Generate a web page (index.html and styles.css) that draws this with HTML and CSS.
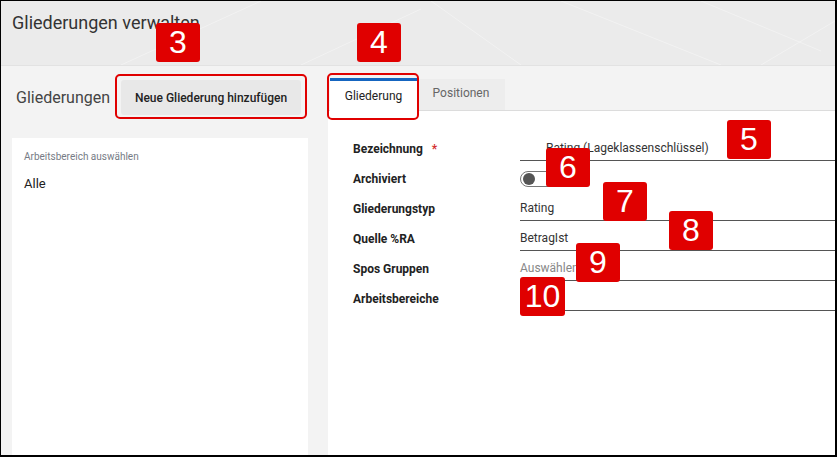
FILE: index.html
```html
<!DOCTYPE html>
<html lang="de">
<head>
    <meta charset="UTF-8">
    <meta name="viewport" content="width=device-width, initial-scale=1.0">
    <title>Gliederungen verwalten</title>
    <link rel="stylesheet" href="styles.css">
</head>
<body>
    <div class="frame">
        <header class="top">
            <svg class="top-texture" width="834" height="64" viewBox="0 0 834 64">
                <path d="M120 64 L260 0 M300 64 L420 8 M560 0 L720 64 M700 0 L820 50 M760 64 L834 20 M430 0 L520 64" stroke="#ffffff" stroke-width="1" fill="none" opacity="0.35"/>
            </svg>
            <h1>Gliederungen verwalten</h1>
        </header>

        <div class="main">
            <div class="left">
                <div class="left-head">
                    <span class="left-title">Gliederungen</span>
                    <button class="add-button">Neue Gliederung hinzufügen</button>
                </div>
                <div class="panel">
                    <div class="panel-label">Arbeitsbereich auswählen</div>
                    <div class="panel-item">Alle</div>
                </div>
            </div>

            <div class="right">
                <div class="tabs">
                    <div class="tab active">Gliederung</div>
                    <div class="tab">Positionen</div>
                </div>
                <div class="form-panel">
                    <div class="row">
                        <label class="field-label">Bezeichnung <span class="req">*</span></label>
                        <div class="field line indent">Rating (Lageklassenschlüssel)</div>
                    </div>
                    <div class="row">
                        <label class="field-label">Archiviert</label>
                        <div class="field">
                            <span class="toggle"><span class="knob"></span></span>
                        </div>
                    </div>
                    <div class="row">
                        <label class="field-label">Gliederungstyp</label>
                        <div class="field line">Rating</div>
                    </div>
                    <div class="row">
                        <label class="field-label">Quelle %RA</label>
                        <div class="field line">BetragIst</div>
                    </div>
                    <div class="row">
                        <label class="field-label">Spos Gruppen</label>
                        <div class="field line placeholder">Auswählen</div>
                    </div>
                    <div class="row">
                        <label class="field-label">Arbeitsbereiche</label>
                        <div class="field line"></div>
                    </div>
                </div>
            </div>
        </div>

        <!-- Markierungen -->
        <div class="outline outline-button"></div>
        <div class="outline outline-tab"></div>
        <div class="badge b3">3</div>
        <div class="badge b4">4</div>
        <div class="badge b5">5</div>
        <div class="badge b6">6</div>
        <div class="badge b7">7</div>
        <div class="badge b8">8</div>
        <div class="badge b9">9</div>
        <div class="badge b10">10</div>
    </div>
</body>
</html>
```

FILE: styles.css
```css
* {
    box-sizing: border-box;
}
body {
    margin: 0;
    font-family: Roboto, "Liberation Sans", Arial, sans-serif;
    background: #ffffff;
}
.frame {
    position: relative;
    width: 837px;
    height: 457px;
    border-style: solid;
    border-color: #000;
    border-width: 1px 2px 2px 1px;
    background-color: #f3f3f3;
    overflow: hidden;
}
.top {
    position: relative;
    height: 65px;
    background-color: #ebebeb;
    border-bottom: 1px solid #e2e2e2;
}
.top-texture {
    position: absolute;
    left: 0;
    top: 0;
}
.top h1 {
    position: relative;
    margin: 0;
    padding: 11px 0 0 11px;
    font-size: 18px;
    font-weight: normal;
    line-height: 22px;
    color: #333;
}
.main {
    display: grid;
    grid-template-columns: 296px 1fr;
    column-gap: 20px;
    padding-left: 11px;
    height: 390px;
}
.left {
    display: flex;
    flex-direction: column;
}
.left-head {
    height: 72px;
    padding: 12px 7px 0 4px;
    display: flex;
    align-items: flex-start;
    justify-content: space-between;
}
.left-title {
    line-height: 40px;
    font-size: 16px;
    color: #444;
}
.add-button {
    margin-top: 2px;
    width: 180px;
    height: 35px;
    border: none;
    border-radius: 3px;
    background-color: #e8e8e8;
    font-family: Roboto, "Liberation Sans", Arial, sans-serif;
    font-size: 12px;
    font-weight: 500;
    color: #222;
}
.panel {
    flex: 1;
    background: #ffffff;
    padding: 13px 12px 0 12px;
}
.panel-label {
    font-size: 10px;
    line-height: 12px;
    color: #767b85;
}
.panel-item {
    margin-top: 13px;
    font-size: 13px;
    line-height: 16px;
    color: #222;
}
.right {
    display: flex;
    flex-direction: column;
}
.tabs {
    height: 45px;
    padding: 12px 0 0 2px;
    display: flex;
    align-items: flex-end;
    border-bottom: 1px solid #dcdcdc;
}
.tab {
    width: 88px;
    height: 31px;
    font-size: 12px;
    line-height: 29px;
    text-align: center;
    color: #666;
    background-color: #ededed;
}
.tab.active {
    width: 87px;
    height: 33px;
    margin-bottom: -1px;
    border-top: 3px solid #1565c0;
    line-height: 30px;
    color: #222;
    background: #ffffff;
}
.form-panel {
    flex: 1;
    background: #ffffff;
    padding: 23px 0 0 25px;
}
.row {
    display: grid;
    grid-template-columns: 167px 1fr;
    height: 30px;
    align-items: center;
}
.field-label {
    font-size: 12px;
    font-weight: bold;
    color: #222;
}
.req {
    color: #d32f2f;
    margin-left: 6px;
}
.field {
    height: 24px;
    font-size: 12px;
    line-height: 23px;
    color: #333;
    display: flex;
    align-items: center;
}
.field.line {
    border-bottom: 1px solid #555;
}
.field.indent {
    padding-left: 26px;
}
.field.placeholder {
    color: #888;
}
.toggle {
    position: relative;
    width: 37px;
    height: 16px;
    border: 1px solid #777;
    border-radius: 8px;
    background: #fff;
}
.knob {
    position: absolute;
    left: 2px;
    top: 1px;
    width: 12px;
    height: 12px;
    border-radius: 50%;
    background-color: #555;
}
.outline {
    position: absolute;
    border: 2px solid #e00000;
    border-radius: 5px;
}
.outline-button {
    left: 114px;
    top: 73px;
    width: 192px;
    height: 45px;
}
.outline-tab {
    left: 326px;
    top: 72px;
    width: 92px;
    height: 47px;
}
.badge {
    position: absolute;
    width: 44px;
    height: 39px;
    border-radius: 3px;
    background-color: #e00000;
    color: #fff;
    font-family: "Liberation Sans", Arial, sans-serif;
    font-size: 32px;
    line-height: 39px;
    text-align: center;
}
.b3 { left: 155px; top: 22px; }
.b4 { left: 356px; top: 22px; }
.b5 { left: 726px; top: 119px; }
.b6 { left: 545px; top: 147px; }
.b7 { left: 602px; top: 181px; }
.b8 { left: 668px; top: 210px; }
.b9 { left: 575px; top: 242px; }
.b10 { left: 519px; top: 276px; width: 45px; }
```
